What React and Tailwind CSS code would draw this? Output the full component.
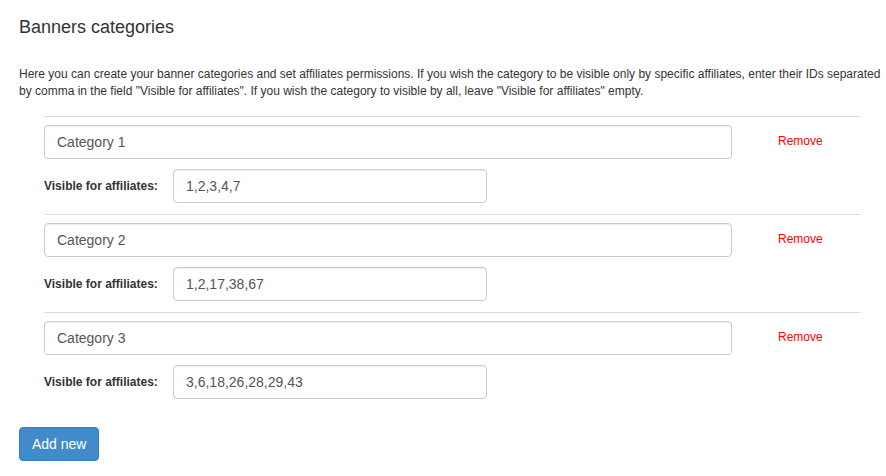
import { useState } from "react";

function CategoryRow({ cat, onChange, onRemove, last }) {
  return (
    <div className={`pt-[8px] ${last ? "pb-0" : "pb-[11px]"} border-t border-[#dddddd]`}>
      <div className="flex items-center">
        <input
          type="text"
          value={cat.name}
          onChange={(e) => onChange({ ...cat, name: e.target.value })}
          className="w-[688px] h-[34px] px-[12px] text-[14px] text-[#555555] border border-[#cccccc] rounded-[4px] shadow-[inset_0_1px_1px_rgba(0,0,0,0.075)] outline-none"
        />
        <a
          href="#"
          onClick={(e) => {
            e.preventDefault();
            onRemove();
          }}
          className="ml-[46px] -mt-[2px] text-[12px] text-[#ff0000]"
        >
          Remove
        </a>
      </div>
      <div className="flex items-center mt-[10px]">
        <label className="w-[129px] text-[12px] font-bold text-[#333333]">
          Visible for affiliates:
        </label>
        <input
          type="text"
          value={cat.affiliates}
          onChange={(e) => onChange({ ...cat, affiliates: e.target.value })}
          className="w-[314px] h-[34px] px-[12px] text-[14px] text-[#555555] border border-[#cccccc] rounded-[4px] shadow-[inset_0_1px_1px_rgba(0,0,0,0.075)] outline-none"
        />
      </div>
    </div>
  );
}

export default function App() {
  const [categories, setCategories] = useState([
    { id: 1, name: "Category 1", affiliates: "1,2,3,4,7" },
    { id: 2, name: "Category 2", affiliates: "1,2,17,38,67" },
    { id: 3, name: "Category 3", affiliates: "3,6,18,26,28,29,43" },
  ]);

  const updateCat = (updated) =>
    setCategories((prev) => prev.map((c) => (c.id === updated.id ? updated : c)));

  const addNew = () =>
    setCategories((prev) => [...prev, { id: Date.now(), name: "", affiliates: "" }]);

  return (
    <div className="min-h-screen bg-white px-[19px] pt-[17px] font-['Liberation_Sans',Arial,sans-serif] text-[#333333]">
      <h3 className="text-[18px] leading-[20px] font-normal">Banners categories</h3>

      <p className="mt-[29px] w-[867px] -mr-[19px] text-[12px] leading-[17px]">
        Here you can create your banner categories and set affiliates permissions. If you wish the category to be visible only by specific affiliates, enter their IDs separated by comma in the field "Visible for affiliates". If you wish the category to visible by all, leave "Visible for affiliates" empty.
      </p>

      {/* Categories list */}
      <div className="mt-[16px] ml-[17px] w-[825px]">
        {categories.map((cat, idx) => (
          <div key={cat.id} className="pl-[8px]">
            <CategoryRow
              cat={cat}
              last={idx === categories.length - 1}
              onChange={updateCat}
              onRemove={() => setCategories((prev) => prev.filter((c) => c.id !== cat.id))}
            />
          </div>
        ))}
      </div>

      <button
        onClick={addNew}
        className="mt-[28px] h-[34px] px-[12px] text-[14px] text-white bg-[#428bca] border border-[#357ebd] rounded-[4px]"
      >
        Add new
      </button>
    </div>
  );
}
